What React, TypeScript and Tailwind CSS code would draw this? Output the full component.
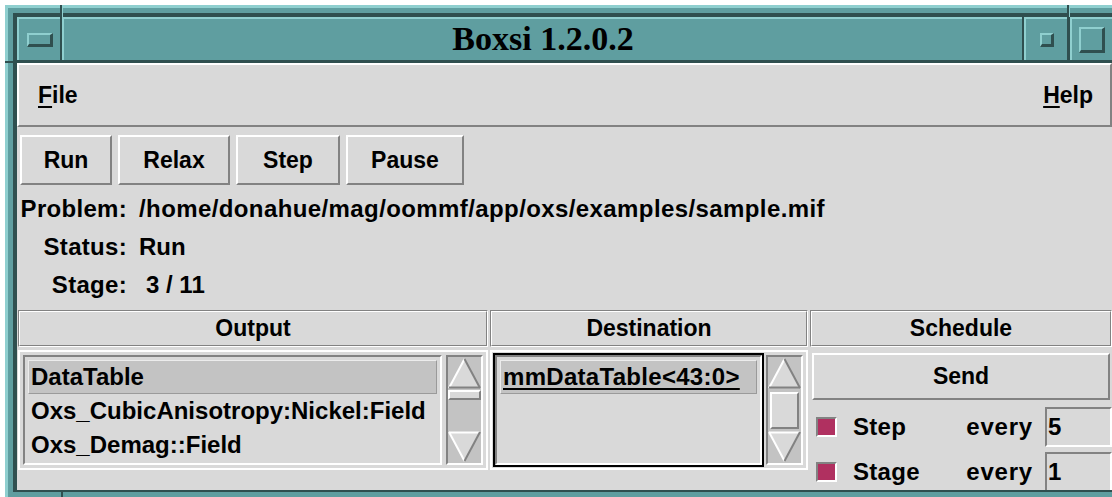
import React from "react";

// Tk-style 3D bevels on the #d9d9d9 background
const raised = "border-2 border-t-white border-l-white border-r-[#828282] border-b-[#828282]";
const sunken = "border-2 border-t-[#828282] border-l-[#828282] border-r-white border-b-white";

function UpArrow() {
  return (
    <svg width="33" height="32" viewBox="0 0 33 32" className="block shrink-0">
      <polygon points="16.5,2 1,31 32,31" fill="#d9d9d9" />
      <line x1="1" y1="31" x2="16.5" y2="2" stroke="#ffffff" strokeWidth="2" />
      <line x1="16.5" y1="2" x2="32" y2="31" stroke="#828282" strokeWidth="2" />
      <line x1="1" y1="30.5" x2="32" y2="30.5" stroke="#828282" strokeWidth="2" />
    </svg>
  );
}

function DownArrow() {
  return (
    <svg width="33" height="32" viewBox="0 0 33 32" className="block shrink-0">
      <polygon points="1,1 32,1 16.5,30" fill="#d9d9d9" />
      <line x1="1" y1="1.5" x2="32" y2="1.5" stroke="#ffffff" strokeWidth="2" />
      <line x1="1" y1="1" x2="16.5" y2="30" stroke="#ffffff" strokeWidth="2" />
      <line x1="32" y1="1" x2="16.5" y2="30" stroke="#828282" strokeWidth="2" />
    </svg>
  );
}

function Scrollbar({ thumb }: { thumb: string }) {
  return (
    <div className="w-[41px] p-[2px] flex shrink-0">
      <div className={`flex-1 flex flex-col bg-[#c3c3c3] ${sunken}`}>
        <UpArrow />
        <div className="flex-1 flex flex-col">
          <div className={`bg-[#d9d9d9] ${raised} ${thumb}`} />
        </div>
        <DownArrow />
      </div>
    </div>
  );
}

function Header({ children }: { children: React.ReactNode }) {
  return (
    <div className="h-[37px] border border-t-[#828282] border-l-[#828282] border-r-white border-b-white">
      <div className="h-full border border-t-white border-l-white border-r-[#828282] border-b-[#828282] flex items-center justify-center">
        {children}
      </div>
    </div>
  );
}

function ListRow({ text, selected, underline }: { text: string; selected?: boolean; underline?: boolean }) {
  return (
    <div
      className={`h-[34px] flex items-center pl-[2px] border whitespace-nowrap ${
        selected
          ? "bg-[#c3c3c3] border-t-[#ececec] border-l-[#ececec] border-r-[#9a9a9a] border-b-[#9a9a9a]"
          : "border-transparent"
      }`}
    >
      <span className={underline ? "underline decoration-2 underline-offset-[3px]" : ""}>{text}</span>
    </div>
  );
}

function ScheduleRow({ label, value, gap }: { label: string; value: string; gap: string }) {
  return (
    <div className={`h-[40px] flex items-center pl-[6px] shrink-0 text-[24px] tracking-[0.3px] ${gap}`}>
      <div className={`w-[21px] h-[20px] bg-[#b03060] ${sunken}`} />
      <div className="ml-[16px] flex-1">{label}</div>
      <div className="tracking-[0.8px]">every</div>
      <div className={`ml-[12px] w-[67px] h-[40px] flex items-center pl-px ${sunken}`}>{value}</div>
    </div>
  );
}

const info: [string, string, string][] = [
  ["Problem:", "/home/donahue/mag/oommf/app/oxs/examples/sample.mif", "text-[24px] tracking-[0.4px]"],
  ["Status:", "Run", "text-[24px]"],
  ["Stage:", "3 / 11", "text-[24px] pl-[7px]"],
];

export default function App() {
  return (
    <div className="relative w-[1112px] h-[497px] overflow-hidden bg-white pt-[5px] pl-[5px]">
      {/* window manager frame */}
      <div className="w-[1130px] h-[520px] bg-[#5f9ea0] border-t-[3px] border-l-[3px] border-[#8fcfcf] pt-[5px] pl-[5px]">
        <div className="w-[1099px] border-t-[4px] border-l-[4px] border-[#2f4f4f]">
          {/* title bar */}
          <div className="h-[46px] flex border-b-[3px] border-[#2f4f4f]">
            <div className="w-[43px] border-t-2 border-l-2 border-[#8fcfcf] flex items-center justify-center">
              <div className="w-[26px] h-[14px] border-t-2 border-l-2 border-t-[#8fcfcf] border-l-[#8fcfcf] border-b-[3px] border-r-[3px] border-b-[#2f4f4f] border-r-[#2f4f4f]" />
            </div>
            <div className="w-[2px] bg-[#2f4f4f]" />
            <div className="flex-1 border-t-2 border-l-2 border-[#8fcfcf] flex items-center justify-center pb-[2px] font-['Liberation_Serif','Times_New_Roman',serif] font-bold text-[34px] text-black leading-none">
              Boxsi 1.2.0.2
            </div>
            <div className="w-[2px] bg-[#2f4f4f]" />
            <div className="w-[43px] border-t-2 border-l-2 border-[#8fcfcf] flex items-center justify-center">
              <div className="w-[14px] h-[14px] border-t-2 border-l-2 border-t-[#8fcfcf] border-l-[#8fcfcf] border-b-[3px] border-r-[3px] border-b-[#2f4f4f] border-r-[#2f4f4f]" />
            </div>
            <div className="w-[3px] bg-[#2f4f4f]" />
            <div className="w-[42px] border-t-2 border-l-2 border-[#8fcfcf] flex items-center justify-center">
              <div className="w-[26px] h-[26px] border-t-2 border-l-2 border-t-[#8fcfcf] border-l-[#8fcfcf] border-b-[3px] border-r-[3px] border-b-[#2f4f4f] border-r-[#2f4f4f]" />
            </div>
          </div>

          {/* client area */}
          <div className="h-[429px] border-b-2 border-[#2f4f4f]">
            <div className="h-full overflow-hidden bg-[#d9d9d9] text-black font-['Liberation_Sans',Arial,sans-serif] font-bold text-[23px] leading-none">
              {/* menu bar */}
              <div className={`h-[64px] flex items-center justify-between pl-[19px] pr-[17px] ${raised}`}>
                <div>
                  <span className="underline decoration-2 underline-offset-[3px]">F</span>ile
                </div>
                <div>
                  <span className="underline decoration-2 underline-offset-[3px]">H</span>elp
                </div>
              </div>

              {/* action buttons */}
              <div className="mt-[8px] pl-[3px] flex gap-[6px]">
                <div className={`w-[92px] h-[50px] flex items-center justify-center ${raised}`}>Run</div>
                <div className={`w-[112px] h-[50px] flex items-center justify-center ${raised}`}>Relax</div>
                <div className={`w-[104px] h-[50px] flex items-center justify-center ${raised}`}>Step</div>
                <div className={`w-[118px] h-[50px] flex items-center justify-center ${raised}`}>Pause</div>
              </div>

              {/* problem info */}
              <div className="mt-[5px] grid grid-cols-[110px_1fr] gap-x-[12px]">
                {info.map(([k, v, cls]) => (
                  <React.Fragment key={k}>
                    <div className="h-[38px] flex items-center justify-end whitespace-nowrap text-[24px] tracking-[0.3px]">{k}</div>
                    <div className={`h-[38px] flex items-center whitespace-nowrap ${cls}`}>{v}</div>
                  </React.Fragment>
                ))}
              </div>

              {/* output / destination / schedule */}
              <div className="mt-[6px] pl-px flex gap-[2px]">
                <div className="w-[470px] flex flex-col shrink-0">
                  <Header>Output</Header>
                  <div className="mt-[3px] h-[120px] border-2 border-white p-px flex">
                    <div className="flex-1 p-[2px] flex">
                      <div className={`flex-1 pt-[3px] px-[3px] text-[24px] ${sunken}`}>
                        <ListRow text="DataTable" selected />
                        <ListRow text="Oxs_CubicAnisotropy:Nickel:Field" />
                        <ListRow text="Oxs_Demag::Field" />
                      </div>
                    </div>
                    <Scrollbar thumb="mt-px h-[10px]" />
                  </div>
                </div>

                <div className="w-[318px] flex flex-col shrink-0">
                  <Header>Destination</Header>
                  <div className="mt-[3px] h-[120px] border-2 border-white p-px flex">
                    <div className="flex-1 border-2 border-black flex">
                      <div className={`flex-1 pt-[3px] px-[3px] text-[24px] tracking-[0.3px] ${sunken}`}>
                        <ListRow text="mmDataTable<43:0>" selected underline />
                      </div>
                    </div>
                    <Scrollbar thumb="mt-[3px] h-[37px] mx-[2px]" />
                  </div>
                </div>

                <div className="flex-1 flex flex-col">
                  <Header>Schedule</Header>
                  <div className={`mt-[6px] mx-[2px] h-[47px] shrink-0 flex items-center justify-center ${raised}`}>Send</div>
                  <ScheduleRow label="Step" value="5" gap="mt-[7px]" />
                  <ScheduleRow label="Stage" value="1" gap="mt-[5px]" />
                </div>
              </div>
            </div>
          </div>
        </div>
      </div>

      {/* frame corner separators */}
      <div className="absolute left-[60px] top-[5px] w-[2px] h-[12px] bg-[#2f4f4f]" />
      <div className="absolute left-[62px] top-[5px] w-px h-[12px] bg-[#8fcfcf]" />
      <div className="absolute left-[1067px] top-[5px] w-[2px] h-[12px] bg-[#2f4f4f]" />
      <div className="absolute left-[1069px] top-[5px] w-px h-[12px] bg-[#8fcfcf]" />
      <div className="absolute left-[5px] top-[61px] w-[12px] h-[2px] bg-[#2f4f4f]" />
      <div className="absolute left-[61px] top-[492px] w-[2px] h-[5px] bg-[#2f4f4f]" />
    </div>
  );
}
